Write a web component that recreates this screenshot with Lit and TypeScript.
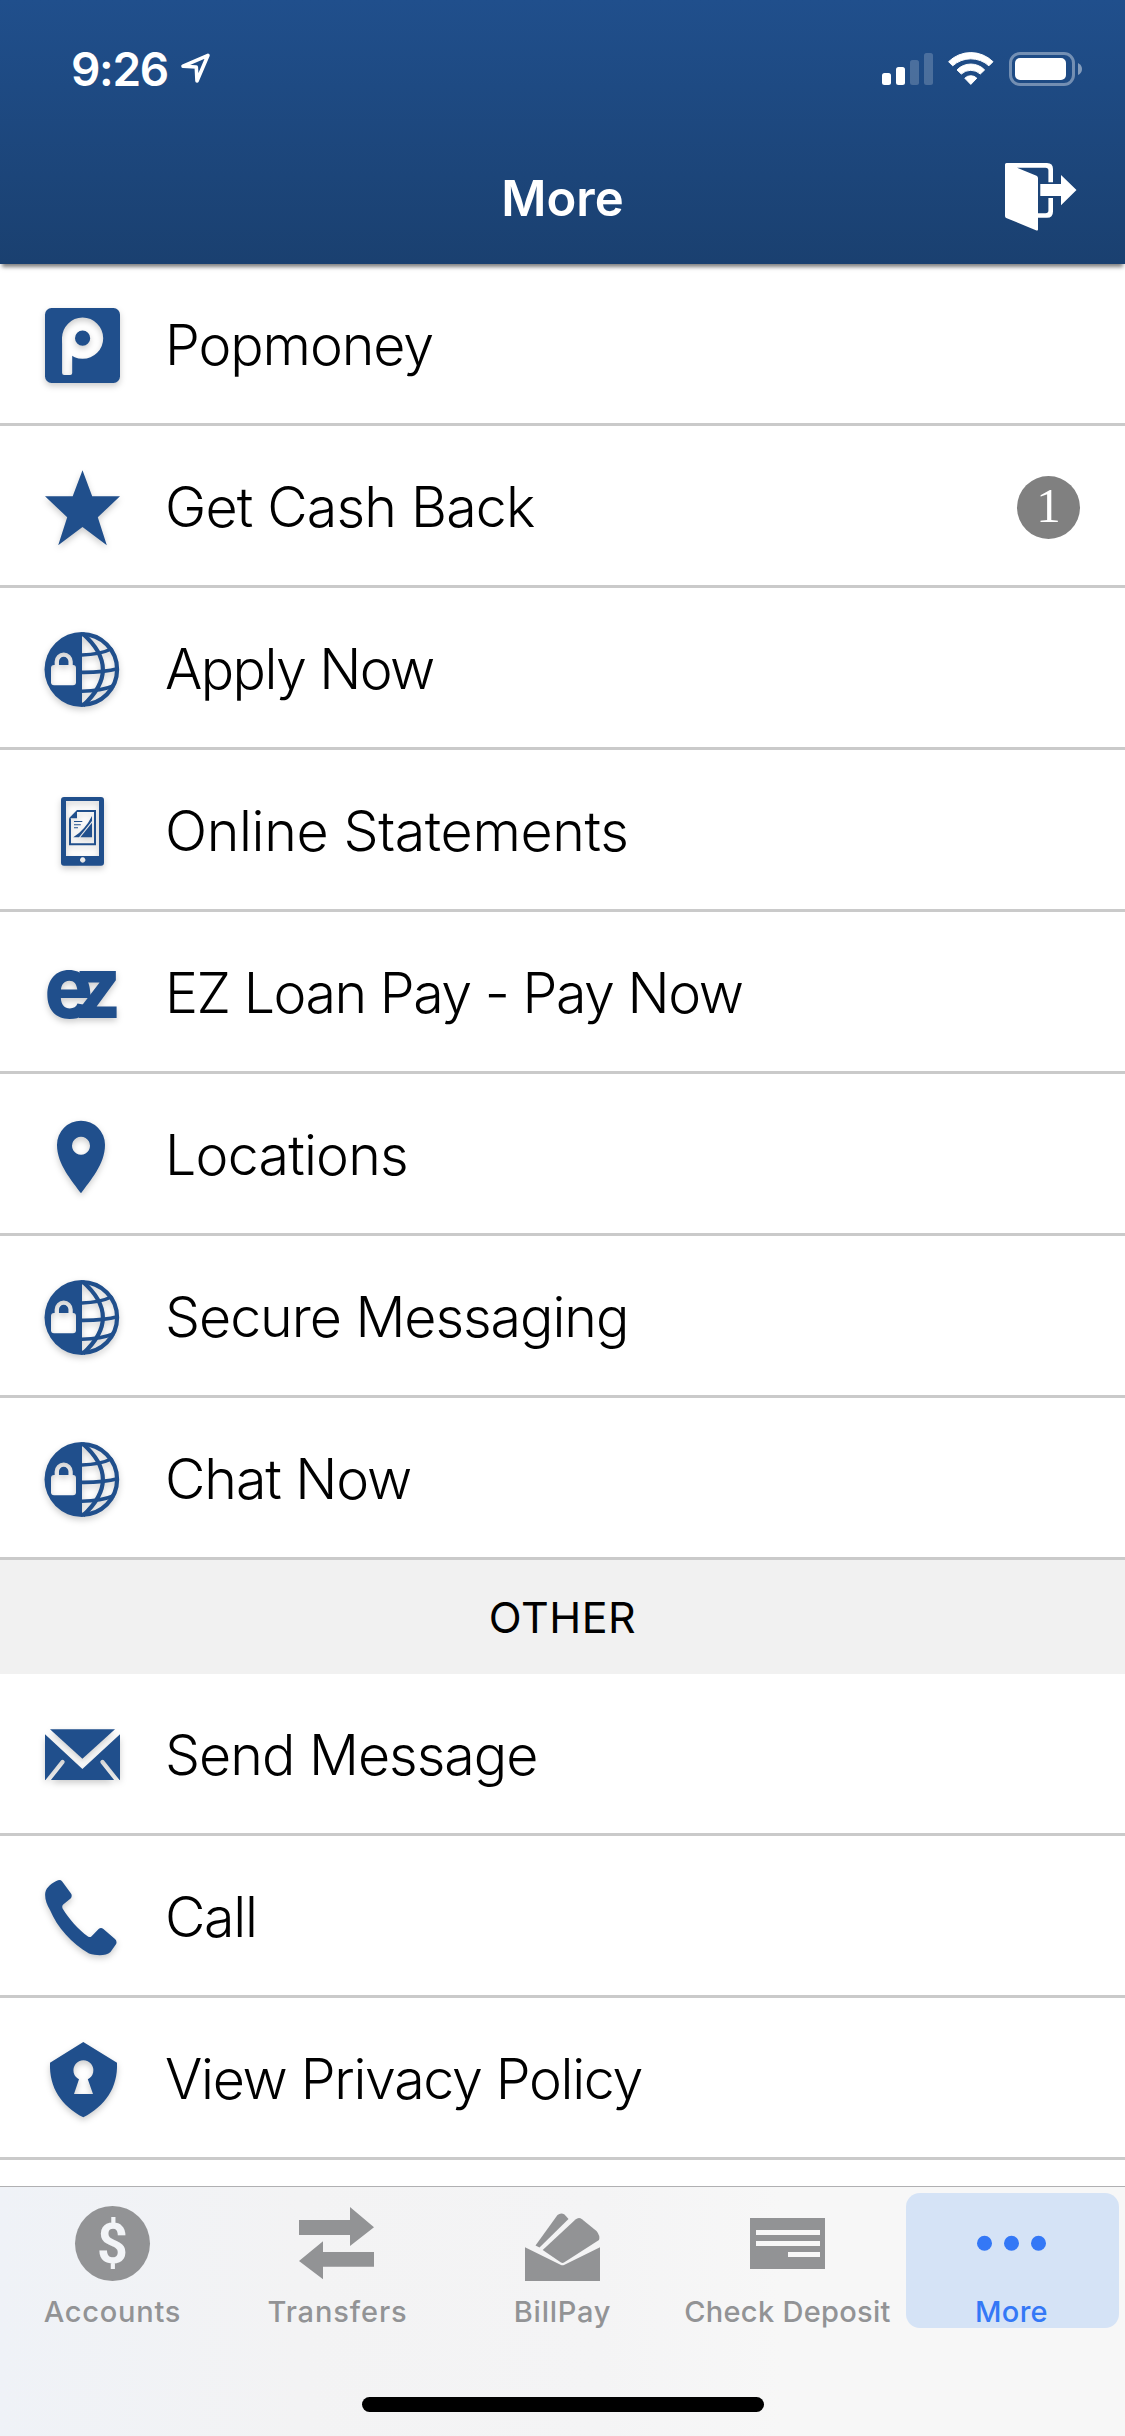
import { LitElement, html, css, svg, TemplateResult, SVGTemplateResult } from "lit";
import { customElement, property } from "lit/decorators.js";

interface Entry {
  label: string;
  icon: string;
  tracking: number;
  badge?: string;
}

const SERVICES: Entry[] = [
  { label: "Popmoney", icon: "popmoney", tracking: -1.1 },
  { label: "Get Cash Back", icon: "star", tracking: -0.83, badge: "1" },
  { label: "Apply Now", icon: "globe", tracking: -1.6 },
  { label: "Online Statements", icon: "statement", tracking: -0.37 },
  { label: "EZ Loan Pay - Pay Now", icon: "ez", tracking: -1.48 },
  { label: "Locations", icon: "pin", tracking: -0.78 },
  { label: "Secure Messaging", icon: "globe", tracking: -1.05 },
  { label: "Chat Now", icon: "globe", tracking: -1.1 },
];

const OTHER: Entry[] = [
  { label: "Send Message", icon: "mail", tracking: -1 },
  { label: "Call", icon: "phone", tracking: -1.3 },
  { label: "View Privacy Policy", icon: "shield", tracking: -1.32 },
];

const TABS: Entry[] = [
  { label: "Accounts", icon: "accounts", tracking: 0.75 },
  { label: "Transfers", icon: "transfers", tracking: 0.9 },
  { label: "BillPay", icon: "billpay", tracking: 0.75 },
  { label: "Check Deposit", icon: "check", tracking: 0.3 },
  { label: "More", icon: "more", tracking: 0.3 },
];

const ICONS: Record<string, SVGTemplateResult> = {
  popmoney: svg`
    <mask id="pop"><rect x="-5" y="-5" width="85" height="85" fill="#fff"/>
      <circle cx="37.6" cy="30.2" r="14.1" fill="none" stroke="#000" stroke-width="13"/>
      <rect x="17.1" y="28" width="10.1" height="39" rx="2" fill="#000"/></mask>
    <rect width="75" height="75" rx="6.5" mask="url(#pop)"/>`,
  star: svg`<polygon points="37.5,.3 47.2,26.3 75,26.3 52.8,47.3 61.8,75.3 37.5,57 13.2,75.3 22.2,47.3 0,26.3 27.7,26.3"/>`,
  globe: svg`
    <mask id="lock"><rect x="-5" y="-5" width="85" height="85" fill="#fff"/>
      <rect x="6" y="33" width="25" height="20.2" rx="3" fill="#000"/>
      <path d="M11.8 34.5V29.6a6.9 6.9 0 0 1 13.8 0V34.5" fill="none" stroke="#000" stroke-width="4.3"/></mask>
    <path d="M37 0A37.5 37.5 0 0 0 37 75Z" mask="url(#lock)"/>
    <g fill="none" stroke="#204f8c" stroke-width="4.2">
      <path d="M36.8 2.2A35.3 35.3 0 0 1 36.8 72.8"/>
      <path d="M37.5 1.5Q78 37 38 73.5"/>
      <path d="M36.8 23Q55 22.5 67.5 16.5M36.8 40.4Q58 40.6 73.5 36.6M36.8 59.3Q56 59 69 53.6" stroke-width="3.6"/>
    </g>`,
  statement: svg`
    <path fill-rule="evenodd" d="M19 3H56a3 3 0 0 1 3 3V68.7a3 3 0 0 1-3 3H19a3 3 0 0 1-3-3V6a3 3 0 0 1 3-3ZM21 7V62H54V7ZM37.7 63.3a2.7 2.7 0 1 0 .01 0Z"/>
    <path d="M32 17H50V50.3H25V24.3" fill="none" stroke="#204f8c" stroke-width="2"/>
    <polygon points="32,16 32,24.3 24,24.3"/>
    <path d="M29 27.5H37.3M29 30.7H35.8M29 33.8H33" stroke="#204f8c" stroke-width="1.1"/>
    <path d="M47 22V27L34 43.3H28.3Q40 36 47 22Z"/>
    <polygon points="47,28.8 47,43.3 35.4,43.3"/>`,
  ez: svg`<text class="ez" transform="translate(-.4 61.5) scale(.94 1)" letter-spacing="-18.2">ez</text>`,
  pin: svg`<path fill-rule="evenodd" d="M36 75.3C27 62.5 12 46.5 12 26.7a24 24 0 0 1 48 0C60 46.5 45 62.5 36 75.3ZM36 18.7a9 9 0 1 0 .01 0Z"/>`,
  mail: svg`
    <mask id="fold"><rect x="-5" y="-5" width="85" height="85" fill="#fff"/>
      <path d="M2 63.5L17.5 44M73 63.5L57.5 44" stroke="#000" stroke-width="4.4" stroke-linecap="round"/></mask>
    <polygon points="5,11.3 70,11.3 37.4,40.8"/>
    <path d="M0 16.3L37.4 51L75 16.3V62H0Z" mask="url(#fold)"/>`,
  phone: svg`<path d="M13 .3Q15.5-.6 17.2 1.5L26 13.5Q27.6 16 25.6 18.6L18.2 24.6Q16.6 26.2 17.6 28.4C24 39 33 49 43 56.5Q45 57.8 46.6 56.2L53.6 49Q56 46.8 58.4 49L70 59Q72.6 61.6 70.8 64.6L65.5 72C61 76 52 76 44 73.5C27 64 12 47 5 30C1.5 24.5-.5 18 .3 12.5C1.5 7 7 3 13 .3Z"/>`,
  shield: svg`<path fill-rule="evenodd" d="M38.3 0L72 20.7C73 46 60 64 38.3 75.3C16.6 64 4 46 5 20.7ZM34 37.3L29 52H48L42.8 37.3A10 10 0 1 0 34 37.3Z"/>`,
  accounts: svg`<circle cx="37.5" cy="37.5" r="37.5"/><text class="dollar" transform="translate(37.5 57) scale(.96 1)" text-anchor="middle">$</text>`,
  transfers: svg`<path transform="translate(-1 0)" d="M0 14H51V1L75 21.3L51 40V29H0ZM75 46H24V35.3L0 55L24 73.3V60.7H75Z"/>`,
  billpay: svg`
    <path d="M0 41.3L36 59Q37.5 59.6 39 59L75 41.3V75H0Z"/>
    <path d="M17.7 44L50.5 13.5Q53.7 10.6 57 13.2L71.5 25Q75.5 30 74 34L39 56.6Q37.5 57.4 36 56.6Z"/>
    <path d="M10.5 39.5L32.5 9Q36 6 39.5 8.6L43.5 13L14.5 41.6Z"/>`,
  check: svg`<path fill-rule="evenodd" d="M0 12H75V63H0ZM6 24V29H70V24ZM6 35V40H70V35ZM38 46V51H70V46Z"/>`,
  more: svg`<circle cx="9.5" cy="37.3" r="7.5"/><circle cx="36.5" cy="37.3" r="7.5"/><circle cx="63.5" cy="37.3" r="7.5"/>`,
};

const glyph = (name: string): TemplateResult =>
  html`<svg class="glyph" width="75" height="75" viewBox="0 0 75 75">${ICONS[name]}</svg>`;

@customElement("status-bar")
class StatusBar extends LitElement {
  static styles = css`
    :host { display: flex; align-items: flex-start; justify-content: space-between; padding: 52px 43px 0 71px; color: #fff; }
    .left { display: flex; align-items: flex-start; gap: 13px; }
    .time { font: 570 46px/34px Inter, "Liberation Sans", sans-serif; letter-spacing: -1.3px; }
    .where { margin-top: 1px; }
    .right { display: flex; align-items: flex-start; }
    .bars { margin: 1px 15px 0 0; }
    .wifi { margin-right: 15px; }
    svg { display: block; overflow: visible; }
  `;
  render() {
    return html`
      <div class="left">
        <span class="time">9:26</span>
        <svg class="where" width="29" height="31" viewBox="0 0 29 31">
          <path d="M27 2.3L2 13.2L15.3 14L16 28Z" fill="none" stroke="#fff" stroke-width="3.6" stroke-linejoin="round"/>
        </svg>
      </div>
      <div class="right">
        <svg class="bars" width="51" height="32" viewBox="0 0 51 32" fill="#fff">
          <rect y="20" width="9" height="12" rx="2.5"/><rect x="14" y="14" width="9" height="18" rx="2.5"/>
          <rect x="28" y="7" width="9" height="25" rx="2.5" opacity=".2"/><rect x="42" width="9" height="32" rx="2.5" opacity=".2"/>
        </svg>
        <svg class="wifi" width="46" height="34" viewBox="0 0 46 34" fill="#fff" stroke="#fff" stroke-width="1" stroke-linejoin="round">
          <path d="M.6 9.7A31.6 31.6 0 0 1 45 9.7L40.9 13.8A26.9 26.9 0 0 0 4.7 13.8Z"/>
          <path d="M9 17.9A19.2 19.2 0 0 1 36.6 17.9L32.3 22A14 14 0 0 0 13.3 22Z"/>
          <path d="M16.8 26.2A8.5 8.5 0 0 1 28.8 26.2L22.8 32.4Z"/>
        </svg>
        <svg class="battery" width="73" height="34" viewBox="0 0 73 34" fill="#fff">
          <rect x="1.5" y="1.5" width="63" height="31" rx="9.5" fill="none" stroke="#fff" stroke-width="3" opacity=".38"/>
          <rect x="6" y="6" width="51" height="22" rx="5"/>
          <path d="M69 11Q73 13 73 17T69 23Z" opacity=".45"/>
        </svg>
      </div>`;
  }
}

@customElement("menu-row")
class MenuRow extends LitElement {
  @property({ attribute: false }) entry!: Entry;
  static styles = css`
    :host { display: flex; align-items: center; flex: none; box-sizing: border-box; height: 162px; padding: 4px 45px 0; border-bottom: 3px solid #cacaca; background: #fff; }
    .glyph { flex: none; display: block; overflow: visible; fill: #204f8c; filter: drop-shadow(0 3px 3px rgba(0, 0, 0, 0.2)); }
    .ez { font: 800 86px Inter, "Liberation Sans", sans-serif; }
    .label { flex: 1; margin: -2px 0 0 45px; font: 330 55.5px/68px Inter, "Liberation Sans", sans-serif; color: #000; white-space: nowrap; }
    .badge { flex: none; width: 63px; height: 63px; border-radius: 50%; background: #808080; color: #fff; font: 49px/60px "Liberation Serif", serif; text-align: center; }
  `;
  render() {
    const e = this.entry;
    return html`${glyph(e.icon)}<span class="label" style="letter-spacing:${e.tracking}px">${e.label}</span>
      ${e.badge ? html`<span class="badge">${e.badge}</span>` : ""}`;
  }
}

@customElement("tab-bar")
class TabBar extends LitElement {
  static styles = css`
    :host { display: flex; flex-direction: column; align-items: center; flex: none; box-sizing: border-box; height: 250px; border-top: 1px solid #b0b0b2;
      background: linear-gradient(90deg, #eff2f7 0, #f3f3f4 300px, #f4f4f5 600px, #f7f7f7 780px); }
    .tabs { display: grid; grid-template-columns: repeat(5, 225px); height: 210px; }
    .tab { display: flex; flex-direction: column; align-items: center; height: 135px; margin: 6px; padding-top: 13px; box-sizing: border-box; border-radius: 14px; color: #929395; fill: #929395; }
    .tab.on { color: #3478f6; fill: #3478f6; background: #d5e3f6; }
    .tab.on .name { margin-right: 2px; }
    .glyph { display: block; overflow: visible; flex: none; }
    .dollar { font: 700 56px Roboto, "Liberation Sans", sans-serif; fill: #f2f4f7; }
    .name { margin-top: 13px; font: 480 29px/36px Inter, "Liberation Sans", sans-serif; white-space: nowrap; }
    .home { width: 402px; height: 15px; border-radius: 8px; background: #000; }
  `;
  render() {
    return html`<div class="tabs">
        ${TABS.map((t) => html`<div class="tab ${t.icon === "more" ? "on" : ""}">${glyph(t.icon)}
          <span class="name" style="letter-spacing:${t.tracking}px">${t.label}</span></div>`)}
      </div><div class="home"></div>`;
  }
}

@customElement("app-root")
class AppRoot extends LitElement {
  static styles = css`
    :host { display: flex; flex-direction: column; width: 1125px; height: 2436px; overflow: hidden; background: #fff; font-family: Inter, "Liberation Sans", sans-serif; }
    .header { position: relative; z-index: 1; flex: none; display: flex; flex-direction: column; height: 264px; background: linear-gradient(#204f8c, #1a4070); box-shadow: 0 5px 4px -2px rgba(0, 0, 0, 0.5); }
    .title-bar { display: grid; grid-template-columns: 1fr auto 1fr; align-items: start; margin-top: 77px; padding: 0 48px; }
    .title { margin-top: 6px; font: 560 49px/60px Inter, "Liberation Sans", sans-serif; color: #fff; grid-column: 2; }
    .exit { justify-self: end; fill: #fff; display: block; }
    .list { flex: 1; min-height: 0; overflow: hidden; display: flex; flex-direction: column; }
    .section { flex: none; height: 114px; background: #f1f1f1; color: #000; font: 400 43px/114px Inter, "Liberation Sans", sans-serif; letter-spacing: 0.5px; text-align: center; }
  `;
  render() {
    return html`
      <header class="header">
        <status-bar></status-bar>
        <div class="title-bar">
          <span class="title">More</span>
          <svg class="exit" width="72" height="68" viewBox="0 0 72 68">
            <path d="M0 1.5Q0 0 1.5 0H42Q48 0 48 6V19.3H43.4V7.5Q43.4 4.7 40.5 4.7H12L31.5 12.8Q33 13.5 33 15V66.5Q33 68 31.5 67.4L1.2 55Q0 54.4 0 53Z"/>
            <path d="M33 50.3H40.5Q43.4 50.3 43.4 47.5V35H48V48.5Q48 54.8 42 54.8H33ZM35.3 21H56V12L71.5 27L56 42.3V33H35.3Z"/>
          </svg>
        </div>
      </header>
      <main class="list">
        ${SERVICES.map((e) => html`<menu-row .entry=${e}></menu-row>`)}
        <div class="section">OTHER</div>
        ${OTHER.map((e) => html`<menu-row .entry=${e}></menu-row>`)}
      </main>
      <tab-bar></tab-bar>`;
  }
}
